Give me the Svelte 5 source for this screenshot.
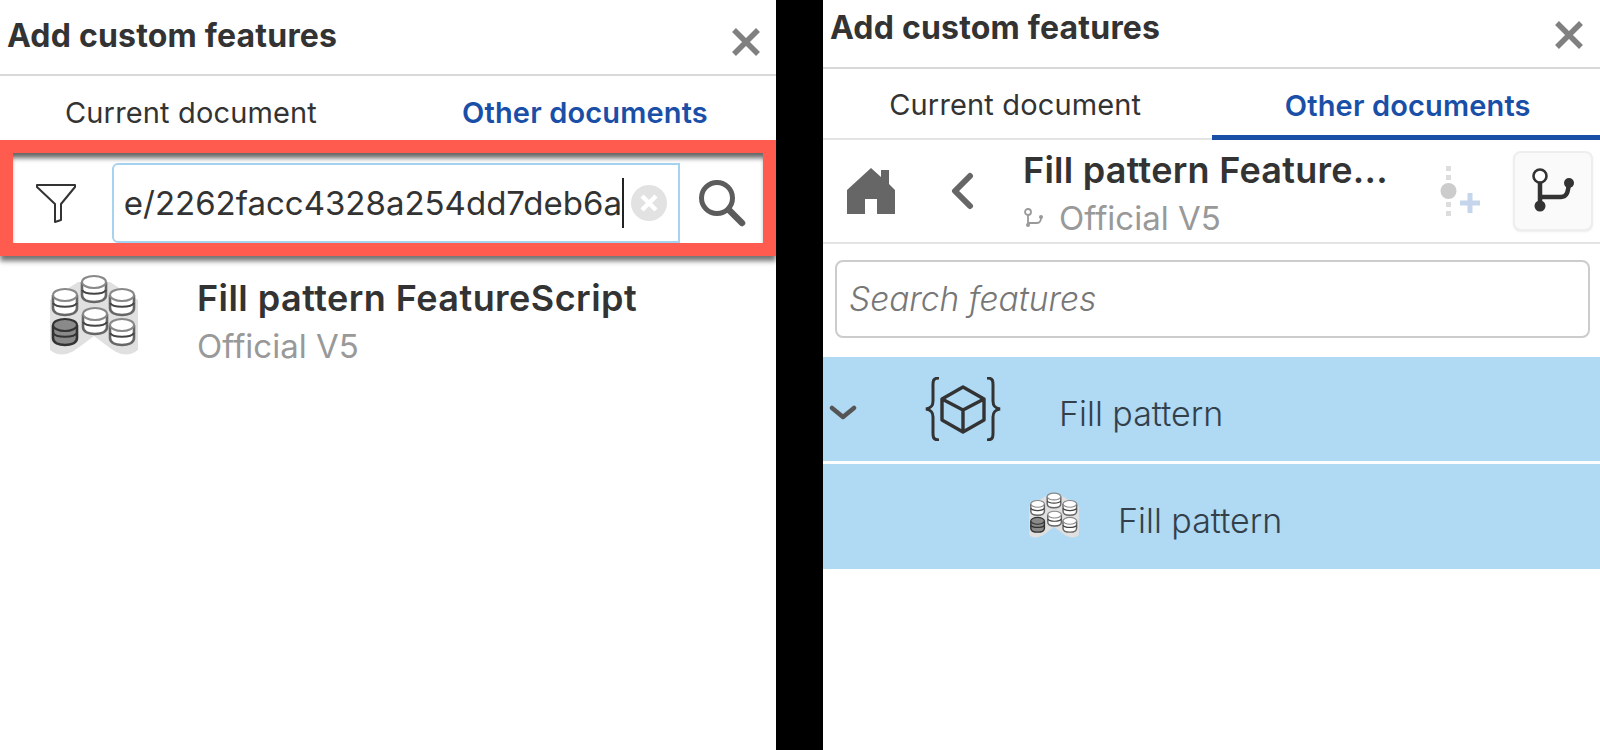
<script>
  let query = 'e/2262facc4328a254dd7deb6a';
</script>

{#snippet closeIcon()}
  <svg class="close" viewBox="0 0 28 28" width="28" height="28">
    <path d="M2 2 L26 26 M26 2 L2 26" stroke="#808080" stroke-width="5.5" fill="none" />
  </svg>
{/snippet}

{#snippet disk(x, y, dark)}
  <g transform="translate({x} {y})">
    <path d="M0 6 V19 C0 24 6 26 12 26 C18 26 24 24 24 19 V6" fill={dark ? '#8a8a8a' : '#fff'} stroke={dark ? '#333' : '#666'} stroke-width="2.6" />
    <ellipse cx="12" cy="6" rx="12" ry="6" fill={dark ? '#8a8a8a' : '#fff'} stroke={dark ? '#333' : '#888'} stroke-width="2" />
    <path d="M0 14 C3 19 21 19 24 14" fill="none" stroke={dark ? '#333' : '#444'} stroke-width="2.2" />
  </g>
{/snippet}

{#snippet patternIcon(size)}
  <svg viewBox="0 0 92 88" width={size} height={size * 88 / 92}>
    <path d="M2 76 V26 L30 8 H62 L90 26 V76 C80 84 70 80 62 74 L46 62 L30 74 C22 80 12 84 2 76 Z" fill="#e0e0e0" />
    {@render disk(34, 2, false)}
    {@render disk(5, 15, false)}
    {@render disk(62, 15, false)}
    {@render disk(35, 34, false)}
    {@render disk(5, 45, true)}
    {@render disk(62, 45, false)}
  </svg>
{/snippet}

<div class="page">
  <section class="panel">
    <header class="head left-head">
      <h1>Add custom features</h1>
      {@render closeIcon()}
    </header>
    <nav class="tabs left-tabs">
      <div class="tab">Current document</div>
      <div class="tab active">Other documents</div>
    </nav>

    <div class="highlight">
      <div class="search-bar">
        <div class="filter">
          <svg viewBox="0 0 42 42" width="42" height="42">
            <path d="M2 3 H40 V5 L26 22 V38 L20 40 V22 L2 5 Z" fill="none" stroke="#333" stroke-width="2" stroke-linejoin="round" />
          </svg>
        </div>
        <div class="field">
          <div class="query-clip"><span class="query">{query}</span></div>
          <span class="caret"></span>
          <svg class="clear" viewBox="0 0 38 38" width="38" height="38">
            <circle cx="19" cy="19" r="18" fill="#e2e2e2" />
            <path d="M12 12 L26 26 M26 12 L12 26" stroke="#fff" stroke-width="4.5" />
          </svg>
        </div>
        <div class="go">
          <svg viewBox="0 0 50 50" width="50" height="50">
            <circle cx="20" cy="20" r="15.5" fill="none" stroke="#5c5c5c" stroke-width="5" />
            <path d="M32 32 L45 45" stroke="#5c5c5c" stroke-width="6.5" stroke-linecap="round" />
          </svg>
        </div>
      </div>
    </div>

    <div class="result">
      {@render patternIcon(92)}
      <div class="result-text">
        <div class="name">Fill pattern FeatureScript</div>
        <div class="sub">Official V5</div>
      </div>
    </div>
  </section>

  <section class="panel">
    <header class="head right-head">
      <h1>Add custom features</h1>
      {@render closeIcon()}
    </header>
    <nav class="tabs right-tabs">
      <div class="tab">Current document</div>
      <div class="tab active underlined">Other documents</div>
    </nav>

    <div class="doc-row">
      <svg class="home" viewBox="0 0 48 48" width="48" height="48">
        <path d="M24 1 L34 10 V3 H42 V17 L48 23 V47 H30 V32 H18 V47 H0 V23 Z" fill="#666" />
      </svg>
      <svg class="back" viewBox="0 0 24 38" width="24" height="38">
        <path d="M20 4 L5 19 L20 34" fill="none" stroke="#666" stroke-width="6" stroke-linecap="round" stroke-linejoin="round" />
      </svg>
      <div class="doc-text">
        <div class="name">Fill pattern Feature...</div>
        <div class="sub">
          <svg viewBox="0 0 22 22" width="22" height="22">
            <circle cx="5" cy="5" r="3" fill="none" stroke="#999" stroke-width="1.8" />
            <path d="M5 8 V18 M5 16 H14 C17 16 18 13 18 11" fill="none" stroke="#999" stroke-width="1.8" />
            <circle cx="5" cy="18" r="2" fill="#999" />
            <circle cx="18" cy="10" r="2" fill="#999" />
          </svg>
          Official V5
        </div>
      </div>
      <svg class="add-version" viewBox="0 0 46 50" width="46" height="50">
        <rect x="9" y="0" width="5" height="5" fill="#ddd" />
        <rect x="9" y="9" width="5" height="5" fill="#ddd" />
        <circle cx="11.5" cy="25" r="8" fill="#ccc" />
        <rect x="9" y="36" width="5" height="5" fill="#ddd" />
        <rect x="9" y="45" width="5" height="5" fill="#ddd" />
        <path d="M33 27 V47 M23 37 H43" stroke="#c5d5ec" stroke-width="5" />
      </svg>
      <button class="branch" aria-label="Branches">
        <svg viewBox="0 0 44 46" width="44" height="46">
          <path d="M9 12 V38 M9 29 H30 C36 29 37 24 38 15" fill="none" stroke="#333" stroke-width="4.5" />
          <circle cx="9" cy="8" r="6.5" fill="#fff" stroke="#333" stroke-width="2.6" />
          <circle cx="9" cy="38" r="5.5" fill="#333" />
          <circle cx="38" cy="15" r="5" fill="#333" />
        </svg>
      </button>
    </div>

    <div class="search-wrap">
      <div class="search-features">Search features</div>
    </div>

    <div class="tree-row parent">
      <svg class="chev" viewBox="0 0 28 16" width="28" height="16">
        <path d="M3 3 L14 12 L25 3" fill="none" stroke="#555" stroke-width="4.5" stroke-linecap="round" stroke-linejoin="round" />
      </svg>
      <svg class="fs-icon" viewBox="0 0 78 64" width="78" height="64">
        <path d="M15 1 C8 1 9 5 9 12 V24 C9 29 7 31 2 32 C7 33 9 35 9 40 V52 C9 59 8 63 15 63" fill="none" stroke="#333" stroke-width="3" />
        <path d="M63 1 C70 1 69 5 69 12 V24 C69 29 71 31 76 32 C71 33 69 35 69 40 V52 C69 59 70 63 63 63" fill="none" stroke="#333" stroke-width="3" />
        <path d="M39 10 L60 22 V43 L39 55 L18 43 V22 Z M18 22 L39 33 L60 22 M39 33 V55" fill="none" stroke="#333" stroke-width="3.4" stroke-linejoin="round" />
      </svg>
      <span>Fill pattern</span>
    </div>
    <div class="tree-row child">
      {@render patternIcon(52)}
      <span>Fill pattern</span>
    </div>
  </section>
</div>

<style>
  :global(body) {
    margin: 0;
    background: #000;
  }

  .page {
    width: 1600px;
    height: 750px;
    display: flex;
    justify-content: space-between;
    font-family: Inter, "Liberation Sans", sans-serif;
    color: #333;
    overflow: hidden;
  }

  .panel {
    background: #fff;
    display: flex;
    flex-direction: column;
  }
  .panel:first-child { width: 776px; }
  .panel:last-child { width: 777px; }

  .head {
    display: flex;
    align-items: center;
    justify-content: space-between;
    box-sizing: border-box;
    border-bottom: 2px solid #d8d8d8;
  }
  .left-head { height: 76px; padding: 0 16px 0 7px; }
  .right-head { height: 69px; padding: 0 17px 0 7px; }

  h1 {
    margin: 0;
    font-size: 32px;
    font-weight: 700;
    line-height: 1;
    letter-spacing: 0.2px;
  }
  .left-head h1 { margin-bottom: 3px; }
  .right-head h1 { margin-bottom: 12px; }
  .close { margin-top: 10px; }
  .right-head .close { margin-top: 3px; }

  .tabs { display: flex; }
  .left-tabs { height: 64px; padding-top: 9px; box-sizing: border-box; }
  .right-tabs {
    height: 71px;
    padding-top: 2px;
    border-bottom: 2px solid #e4e4e4;
    box-sizing: border-box;
  }
  .tab {
    flex: 1;
    display: flex;
    align-items: center;
    justify-content: center;
    font-size: 29px;
    letter-spacing: 0.15px;
  }
  .left-tabs .active { padding-left: 12px; }
  .right-tabs .tab:first-child { padding-right: 4px; }
  .right-tabs .active { padding: 4px 0 0 4px; }
  .tab.active {
    color: #1a4fa8;
    font-weight: 600;
  }
  .tab.underlined {
    border-bottom: 5px solid #1a4fa8;
    margin-bottom: -2px;
  }

  .highlight {
    height: 116px;
    box-sizing: border-box;
    border: 13px solid #ff5b4e;
    box-shadow: 0 5px 5px rgba(0, 0, 0, 0.55);
  }
  .search-bar {
    height: 100%;
    display: flex;
    align-items: stretch;
    box-sizing: border-box;
    padding-top: 10px;
    box-shadow: inset 0 7px 5px -2px rgba(0, 0, 0, 0.6);
  }
  .filter {
    width: 85px;
    padding-right: 14px;
    display: flex;
    align-items: center;
    justify-content: center;
  }
  .field {
    flex: 1;
    display: flex;
    align-items: center;
    border: 2px solid #a5d2ee;
    border-radius: 6px 0 0 6px;
    padding: 0 10px;
    overflow: hidden;
    font-size: 33px;
    white-space: nowrap;
  }
  .query-clip {
    flex: 1;
    min-width: 0;
    display: flex;
    justify-content: flex-end;
    overflow: hidden;
  }
  .query { flex-shrink: 0; }
  .caret {
    width: 2px;
    height: 50px;
    background: #222;
    margin-right: 6px;
    flex-shrink: 0;
  }
  .clear { flex-shrink: 0; }
  .go {
    width: 83px;
    display: flex;
    align-items: center;
    justify-content: center;
  }

  .result {
    display: flex;
    align-items: flex-start;
    gap: 57px;
    padding: 18px 0 0 48px;
  }
  .name {
    font-size: 36px;
    font-weight: 600;
    line-height: 48px;
    white-space: nowrap;
    letter-spacing: 0.25px;
  }
  .result .name { letter-spacing: 0.45px; }
  .sub {
    font-size: 33px;
    line-height: 48px;
    color: #999;
    display: flex;
    align-items: center;
    gap: 14px;
  }

  .doc-row {
    height: 104px;
    display: flex;
    align-items: center;
    border-bottom: 2px solid #e4e4e4;
    box-sizing: border-box;
    padding-left: 24px;
  }
  .back { margin-left: 55px; }
  .doc-text { margin-left: 49px; padding-top: 6px; width: 414px; }
  .add-version { margin-right: 30px; }
  .branch {
    width: 80px;
    height: 80px;
    padding: 0;
    display: flex;
    align-items: center;
    justify-content: center;
    background: #fafafa;
    border: 2px solid #eee;
    border-radius: 8px;
    box-shadow: 0 1px 2px rgba(0, 0, 0, 0.08);
  }

  .search-wrap { padding: 16px 10px 19px 12px; }
  .search-features {
    height: 78px;
    box-sizing: border-box;
    display: flex;
    align-items: center;
    padding-left: 12px;
    border: 2px solid #ccc;
    border-radius: 8px;
    font-size: 33.5px;
    font-style: italic;
    font-weight: 300;
    color: #777;
  }

  .tree-row {
    height: 104px;
    background: #b0d9f3;
    display: flex;
    align-items: center;
    font-size: 34px;
    font-weight: 300;
    color: #33404a;
  }
  .tree-row span { padding-top: 8px; }
  .parent { margin-bottom: 3px; }
  .chev { margin: 8px 0 0 6px; }
  .fs-icon { margin-left: 67px; }
  .parent span { margin-left: 57px; }
  .child { height: 105px; padding-left: 205px; }
  .child span { margin-left: 38px; }
</style>
